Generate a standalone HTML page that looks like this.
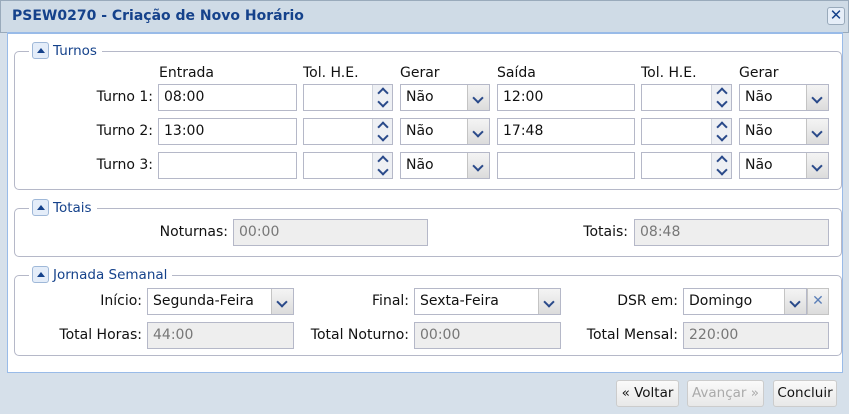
<!DOCTYPE html>
<html><head><meta charset="utf-8"><style>
*{box-sizing:border-box;margin:0;padding:0}
body{width:849px;height:414px;background:#d6e0ea;font-family:"DejaVu Sans","Liberation Sans",sans-serif;font-size:13.5px;color:#111;position:relative;overflow:hidden}
.a{position:absolute}
.title{left:0;top:0;width:849px;height:33px;background:#cfdbe6;border:1px solid #99aabb;}
.title b{position:absolute;left:11px;top:7px;color:#15428b;font-size:14px}
.close{left:827px;top:7px;width:18px;height:18px;border:1px solid #9ab;border-radius:3px;background:#e6eef8;color:#15428b;text-align:center;line-height:15px;font-size:15px}
.body{left:7px;top:32px;width:836px;height:341px;background:#fff;border:1px solid #99bbe8;border-top:2px solid #99bbe8}
.fs{border:1px solid #b5b8c8;border-radius:5px}
.leg{background:#fff;padding:0 5px 0 3px;color:#15428b;font-size:13.5px;height:18px;line-height:18px}
.tg{display:inline-block;width:17px;height:17px;border:1px solid #9fb8d8;border-radius:3px;background:#e4edf9;vertical-align:top;margin-right:4px;position:relative}
.tg:after{content:"";position:absolute;left:4px;top:5px;border-left:4px solid transparent;border-right:4px solid transparent;border-bottom:5px solid #15428b}
.in{border:1px solid #b5b8c8;background:#fff;height:27px;line-height:25px;padding-left:5px;font-size:14px}
.dis{background:#eee;color:#777}
.lb{text-align:right;font-size:14px;line-height:27px}
.hd{font-size:14px}
.trg{position:absolute;right:0;top:0;width:22px;height:25px;background:linear-gradient(#f4f4f4,#dcdcdc);border-left:1px solid #c4c4c4}
.trg:after{content:"";position:absolute;left:6px;top:9px;width:6px;height:6px;border-right:2px solid #2a4a8a;border-bottom:2px solid #2a4a8a;transform:rotate(45deg)}
.sp{position:absolute;right:0;top:0;width:20px;height:25px;background:#eef0f4;border-left:1px solid #d0d4dc}
.sp:before,.sp:after{content:"";position:absolute;left:6px;width:6px;height:6px;border-left:2px solid #2a4a8a;border-top:2px solid #2a4a8a}
.sp:before{top:4px;transform:rotate(45deg)}
.sp:after{top:13px;transform:rotate(225deg)}
.btn{border:1px solid #ccc;border-radius:3px;background:linear-gradient(#fafafa,#e8e8e8);height:27px;line-height:25px;text-align:center;font-size:13.5px}
</style></head><body>
<div class="a title"><b>PSEW0270 - Criação de Novo Horário</b></div>
<div class="a close">✕</div>
<div class="a body"></div>

<div class="a fs" style="left:14px;top:51px;width:828px;height:139px"></div>
<div class="a leg" style="left:29px;top:42px"><span class="tg"></span>Turnos</div>
<div class="a hd" style="left:159px;top:65px">Entrada</div>
<div class="a hd" style="left:303px;top:65px">Tol. H.E.</div>
<div class="a hd" style="left:400px;top:65px">Gerar</div>
<div class="a hd" style="left:497px;top:65px">Saída</div>
<div class="a hd" style="left:641px;top:65px">Tol. H.E.</div>
<div class="a hd" style="left:739px;top:65px">Gerar</div>

<div class="a lb" style="left:40px;top:84px;width:113px">Turno 1:</div>
<div class="a lb" style="left:40px;top:118px;width:113px">Turno 2:</div>
<div class="a lb" style="left:40px;top:152px;width:113px">Turno 3:</div>

<div class="a in" style="left:158px;top:84px;width:139px">08:00</div>
<div class="a in" style="left:158px;top:118px;width:139px">13:00</div>
<div class="a in" style="left:158px;top:152px;width:139px"></div>
<div class="a in" style="left:497px;top:84px;width:138px">12:00</div>
<div class="a in" style="left:497px;top:118px;width:138px">17:48</div>
<div class="a in" style="left:497px;top:152px;width:138px"></div>

<div class="a in" style="left:303px;top:84px;width:90px"><span class="sp"></span></div>
<div class="a in" style="left:303px;top:118px;width:90px"><span class="sp"></span></div>
<div class="a in" style="left:303px;top:152px;width:90px"><span class="sp"></span></div>
<div class="a in" style="left:641px;top:84px;width:91px"><span class="sp"></span></div>
<div class="a in" style="left:641px;top:118px;width:91px"><span class="sp"></span></div>
<div class="a in" style="left:641px;top:152px;width:91px"><span class="sp"></span></div>

<div class="a in" style="left:400px;top:84px;width:90px">Não<span class="trg"></span></div>
<div class="a in" style="left:400px;top:118px;width:90px">Não<span class="trg"></span></div>
<div class="a in" style="left:400px;top:152px;width:90px">Não<span class="trg"></span></div>
<div class="a in" style="left:739px;top:84px;width:90px">Não<span class="trg"></span></div>
<div class="a in" style="left:739px;top:118px;width:90px">Não<span class="trg"></span></div>
<div class="a in" style="left:739px;top:152px;width:90px">Não<span class="trg"></span></div>

<div class="a fs" style="left:14px;top:208px;width:828px;height:49px"></div>
<div class="a leg" style="left:29px;top:199px"><span class="tg"></span>Totais</div>
<div class="a lb" style="left:100px;top:219px;width:128px">Noturnas:</div>
<div class="a in dis" style="left:233px;top:219px;width:195px">00:00</div>
<div class="a lb" style="left:500px;top:219px;width:128px">Totais:</div>
<div class="a in dis" style="left:634px;top:219px;width:195px">08:48</div>

<div class="a fs" style="left:14px;top:275px;width:828px;height:81px"></div>
<div class="a leg" style="left:29px;top:266px"><span class="tg"></span>Jornada Semanal</div>
<div class="a lb" style="left:40px;top:288px;width:102px">Início:</div>
<div class="a in" style="left:147px;top:288px;width:147px">Segunda-Feira<span class="trg"></span></div>
<div class="a lb" style="left:300px;top:288px;width:109px">Final:</div>
<div class="a in" style="left:414px;top:288px;width:147px">Sexta-Feira<span class="trg"></span></div>
<div class="a lb" style="left:560px;top:288px;width:118px">DSR em:</div>
<div class="a in" style="left:683px;top:288px;width:124px">Domingo<span class="trg"></span></div>
<div class="a" style="left:807px;top:288px;width:22px;height:27px;border:1px solid #c4c4c4;background:linear-gradient(#f4f4f4,#dcdcdc);color:#5b7fb8;text-align:center;line-height:24px;font-size:14px;font-weight:bold">✕</div>
<div class="a lb" style="left:40px;top:322px;width:102px">Total Horas:</div>
<div class="a in dis" style="left:147px;top:322px;width:147px">44:00</div>
<div class="a lb" style="left:290px;top:322px;width:119px">Total Noturno:</div>
<div class="a in dis" style="left:414px;top:322px;width:147px">00:00</div>
<div class="a lb" style="left:560px;top:322px;width:118px">Total Mensal:</div>
<div class="a in dis" style="left:683px;top:322px;width:146px">220:00</div>

<div class="a btn" style="left:616px;top:380px;width:63px">« Voltar</div>
<div class="a btn" style="left:687px;top:380px;width:77px;color:#aaa">Avançar »</div>
<div class="a btn" style="left:773px;top:380px;width:64px">Concluir</div>
</body></html>
